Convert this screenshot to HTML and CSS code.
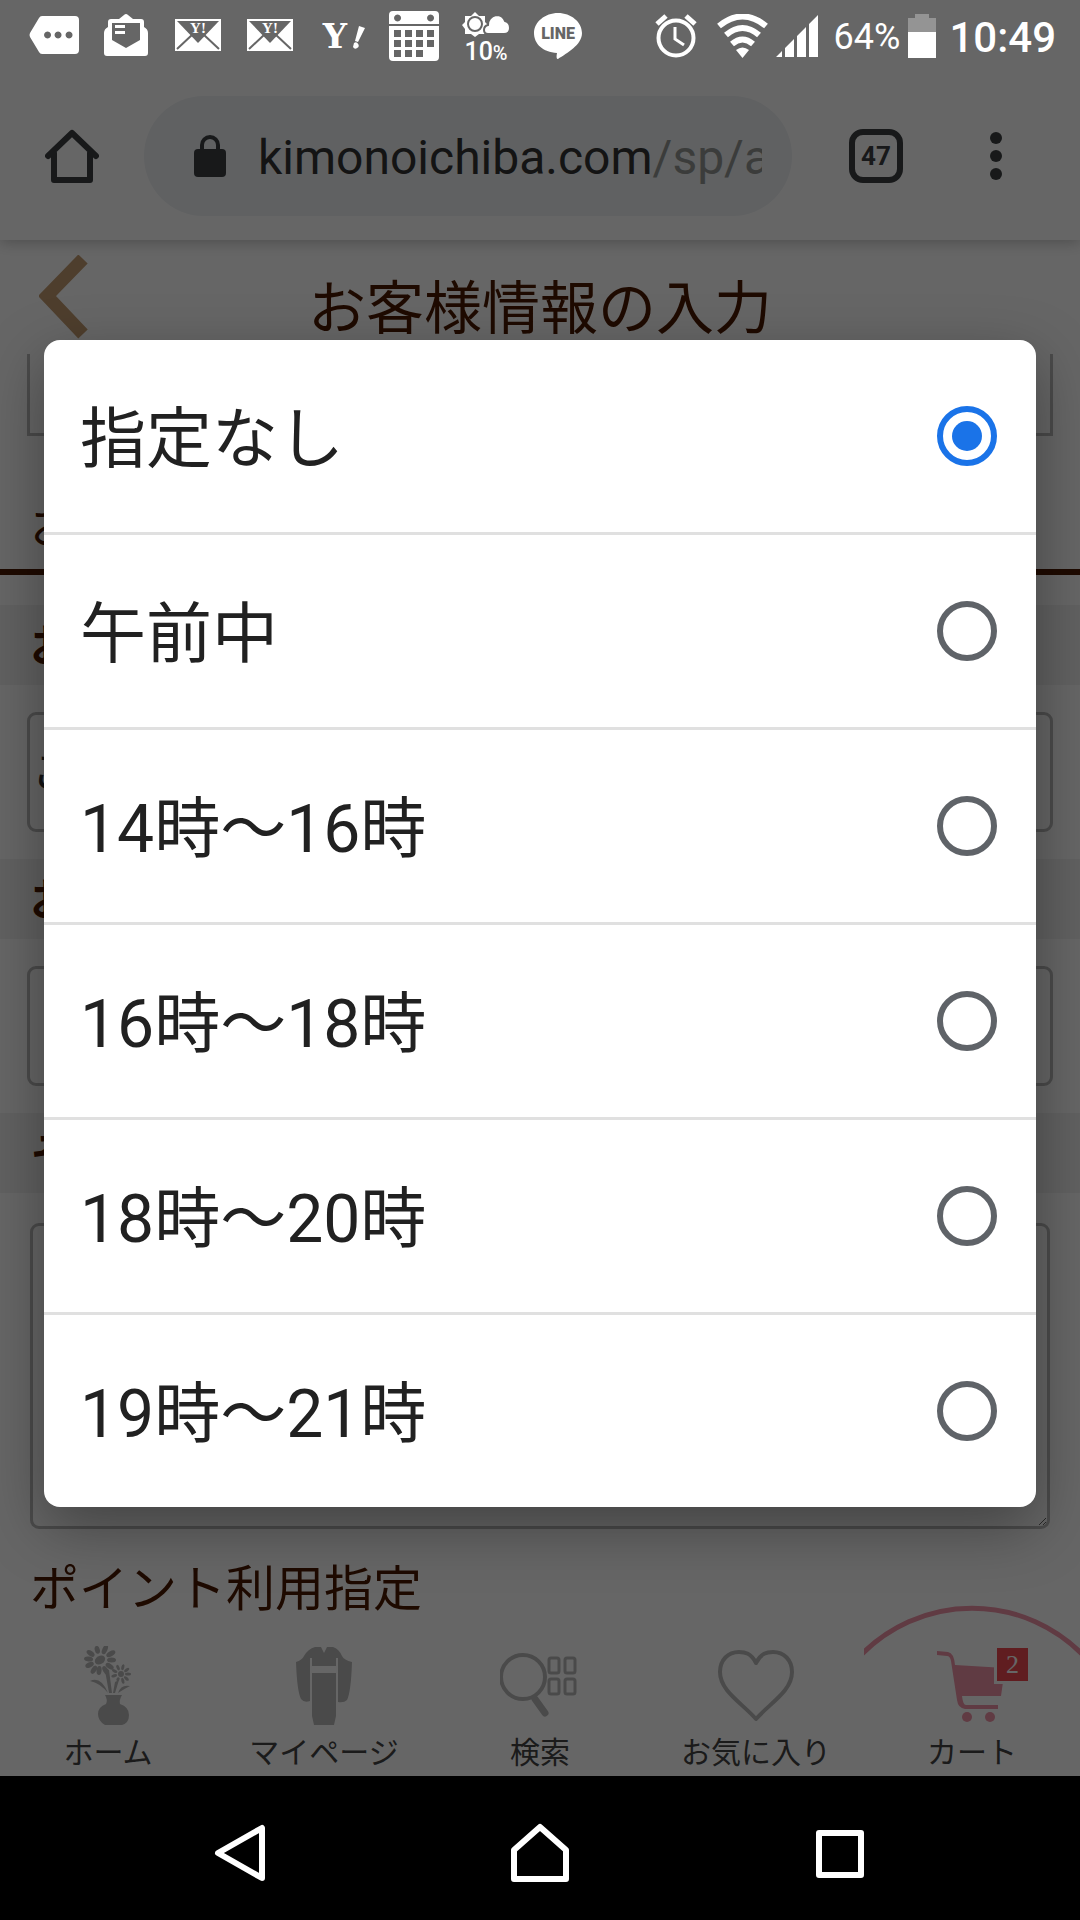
FILE: index.html
```html
<!DOCTYPE html>
<html lang="ja">
<head>
    <meta charset="UTF-8">
    <meta name="viewport" content="width=device-width, initial-scale=1.0">
    <title>お客様情報の入力</title>
    <link rel="stylesheet" href="styles.css">
</head>
<body>
    <div class="phone">
        <!-- Status bar -->
        <div class="status-bar">
            <div class="status-left">
                <svg width="50" height="50" viewBox="0 0 50 50"><path fill="#fff" fill-rule="evenodd" d="M13 5h33a4 4 0 0 1 4 4v30a4 4 0 0 1-4 4H13q-2 0-3-2L1 26q-1-2 0-4L10 7q1-2 3-2zM18.500 20.500a3.500 3.500 0 1 0 .1 0zM29 20.500a3.500 3.500 0 1 0 .1 0zM40 20.500a3.500 3.500 0 1 0 .1 0z"/></svg>
                <svg width="50" height="50" viewBox="0 0 50 50"><path fill="#fff" fill-rule="evenodd" d="M18 8l5-4q2-2 4 0l5 4h8q3 0 3 3v5q4 2 4 6v20q0 3-3 3H6q-3 0-3-3V22q0-4 4-6v-5q0-3 3-3zM11 12v17l14 8 14-8V12z"/><path fill="#fff" d="M14 14h10v3H14zM14 20h10v3H14z"/></svg>
                <svg width="50" height="50" viewBox="0 0 50 50"><path fill="#fff" d="M2 8h46v32H2z"/><path fill="#666" d="M4 10h42L25 32z"/><path stroke="#666" stroke-width="2" d="M4 38l16-15M46 38L30 23"/><text class="y-small" x="25" y="22">Y!</text></svg>
                <svg width="50" height="50" viewBox="0 0 50 50"><path fill="#fff" d="M2 8h46v32H2z"/><path fill="#666" d="M4 10h42L25 32z"/><path stroke="#666" stroke-width="2" d="M4 38l16-15M46 38L30 23"/><text class="y-small" x="25" y="22">Y!</text></svg>
                <svg width="50" height="50" viewBox="0 0 50 50"><text class="y-logo" x="18" y="37">Y</text><path fill="#fff" d="M42 15l6 2-7 14-3-1zM37 32a3 3 0 1 1-1 4z"/></svg>
                <svg width="50" height="50" viewBox="0 0 50 50"><path fill="#fff" fill-rule="evenodd" d="M4 0h42a4 4 0 0 1 4 4v9H0V4a4 4 0 0 1 4-4zM8.500 3.500a3.500 3.500 0 1 0 .1 0zM41.500 3.500a3.500 3.500 0 1 0 .1 0zM0 15h50v31a4 4 0 0 1-4 4H4a4 4 0 0 1-4-4z"/><path fill="#666" d="M5 19h7v7H5zM16 19h7v7h-7zM27 19h7v7h-7zM38 19h7v7h-7zM5 29h7v7H5zM16 29h7v7h-7zM27 29h7v7h-7zM38 29h7v7h-7zM5 39h7v7H5zM16 39h7v7h-7zM27 39h7v7h-7z"/></svg>
                <svg class="weather" width="50" height="50" viewBox="0 0 50 50"><path fill="#fff" d="M14 1l4 4h6v6l3 3-3 4v5h-6l-4 3-4-3H4v-5l-3-4 3-3V5h6z"/><circle cx="14" cy="13" r="7" fill="none" stroke="#666" stroke-width="2"/><path fill="#fff" stroke="#666" stroke-width="2" d="M27 23q-4 0-4-4t4-5q0-8 8-10 7 0 9 6 5 1 5 7 0 6-6 6z"/><text class="rain" x="25" y="49">10<tspan class="rain-unit">%</tspan></text></svg>
                <svg width="50" height="50" viewBox="0 0 50 50"><path fill="#fff" d="M25 2c13 0 24 9 24 20 0 12-15 20-24 26-1 0-2-1-1-6C10 41 1 33 1 22 1 11 12 2 25 2z"/><text class="line-logo" x="25" y="28">LINE</text></svg>
            </div>
            <div class="status-right">
                <svg width="42" height="44" viewBox="0 0 42 44" fill="none" stroke="#fff"><circle cx="21" cy="24" r="17.500" stroke-width="4"/><path stroke-width="5" d="M2 10l9-8M40 10l-9-8"/><path stroke-width="3" d="M20 13v12l9 6"/></svg>
                <svg width="51" height="44" viewBox="0 0 51 44" fill="none" stroke="#fff" stroke-width="6"><path d="M2 12q23.500-19 47 0M9 21q16.500-14 33 0M15 30q10.500-9 21 0"/><path fill="#fff" stroke="none" d="M19 36q6.500-5 13 0l-6.500 8z"/></svg>
                <svg width="42" height="44" viewBox="0 0 42 44" fill="#fff"><path d="M0 43l6-6v6zM9 34l9-9v18H9zM21 22l9-9v30h-9zM33 10l9-9v42h-9z"/></svg>
                <span class="battery-level">64%</span>
                <svg class="battery" width="28" height="44" viewBox="0 0 28 44"><path fill="#949494" d="M7 0h14v4h7v15H0V4h7z"/><path fill="#fff" d="M0 18h28v26H0z"/></svg>
                <span class="clock">10:49</span>
            </div>
        </div>

        <div class="screen">
            <!-- Browser toolbar -->
            <div class="toolbar">
                <button class="icon-button" type="button" aria-label="ホーム">
                    <svg width="54" height="54" viewBox="0 0 54 54" fill="none" stroke="#3c4043" stroke-width="6" stroke-linejoin="round" stroke-linecap="round"><path d="M3 27L27 4l24 23M9 24v27h36V24"/></svg>
                </button>
                <div class="omnibox">
                    <svg width="32" height="42" viewBox="0 0 32 42"><rect y="14" width="32" height="28" rx="4" fill="#3c4043"/><path d="M8 15v-5a8 8 0 0 1 16 0v5" fill="none" stroke="#3c4043" stroke-width="4"/></svg>
                    <div class="url">kimonoichiba.com<span class="url-path">/sp/a</span></div>
                </div>
                <button class="tab-count" type="button">47</button>
                <button class="icon-button" type="button" aria-label="メニュー">
                    <svg width="12" height="48" viewBox="0 0 12 48" fill="#3c4043"><circle cx="6" cy="6" r="6"/><circle cx="6" cy="24" r="6"/><circle cx="6" cy="42" r="6"/></svg>
                </button>
            </div>

            <!-- Shop page -->
            <header class="page-header">
                <a class="back" href="#" aria-label="戻る">
                    <svg width="50" height="84" viewBox="0 0 50 84" fill="none" stroke="#c39c72" stroke-width="13"><path d="M44 4L8 41l36 38"/></svg>
                </a>
                <h1>お客様情報の入力</h1>
            </header>

            <main class="form">
                <input class="field field-cut" type="text" aria-label="入力欄">
                <h2 class="section-title">お</h2>
                <label class="band" for="delivery-date">お</label>
                <select class="field" id="delivery-date">
                    <option>ご</option>
                </select>
                <label class="band" for="delivery-time">お</label>
                <input class="field" type="text" id="delivery-time">
                <label class="band" for="notes">そ</label>
                <textarea class="notes" id="notes"></textarea>
                <h2 class="point-title">ポイント利用指定</h2>
            </main>

            <nav class="tabs">
                <a class="tab" href="#">
                    <svg width="56" height="80" viewBox="0 0 56 80" fill="#b9b9b9">
                        <g transform="translate(20 14)">
                            <ellipse rx="5.500" ry="4" transform="rotate(-30)"/>
                            <ellipse cx="11.500" rx="4.500" ry="2.500"/>
                            <ellipse cx="11.500" rx="4.500" ry="2.500" transform="rotate(33)"/>
                            <ellipse cx="11.500" rx="4.500" ry="2.500" transform="rotate(62)"/>
                            <ellipse cx="10.500" rx="4.500" ry="2.500" transform="rotate(95)"/>
                            <ellipse cx="11.500" rx="4.500" ry="2.500" transform="rotate(122)"/>
                            <ellipse cx="11.500" rx="4.500" ry="2.500" transform="rotate(155)"/>
                            <ellipse cx="11.500" rx="4.500" ry="2.500" transform="rotate(185)"/>
                            <ellipse cx="11.500" rx="4.500" ry="2.500" transform="rotate(215)"/>
                            <ellipse cx="10.500" rx="4" ry="2.500" transform="rotate(255)"/>
                            <ellipse cx="11.500" rx="5" ry="2.500" transform="rotate(295)"/>
                            <ellipse cx="12.500" rx="5" ry="2.500" transform="rotate(330)"/>
                        </g>
                        <g transform="translate(41 28)">
                            <circle r="3"/>
                            <ellipse cx="7" rx="3" ry="1.500"/>
                            <ellipse cx="7" rx="3" ry="1.500" transform="rotate(40)"/>
                            <ellipse cx="7" rx="3" ry="1.500" transform="rotate(75)"/>
                            <ellipse cx="6" rx="2" ry="1.500" transform="rotate(120)"/>
                            <ellipse cx="7" rx="3" ry="1.500" transform="rotate(165)"/>
                            <ellipse cx="7" rx="3" ry="1.500" transform="rotate(205)"/>
                            <ellipse cx="7" rx="3" ry="1.500" transform="rotate(245)"/>
                            <ellipse cx="7" rx="3" ry="1.500" transform="rotate(285)"/>
                            <ellipse cx="7" rx="3" ry="1.500" transform="rotate(325)"/>
                        </g>
                        <path d="M24 21l5 3 3 23h-3L26 30zM35 36l4-2-4 13h-2zM10 35q11-5 18 12Q20 37 10 35zM38 47q3-9 12-7-6 3-12 7zM25 49h17q-3 5-2 9 9 3 9 11t-7 10H25q-7-4-7-11t8-10q2-4-1-9z"/>
                    </svg>
                    <span>ホーム</span>
                </a>
                <a class="tab" href="#">
                    <svg width="56" height="80" viewBox="0 0 56 80" fill="#b9b9b9"><path d="M19 1h6l3 6 3-6h6q6 2 9 9 2 4 10 6-1 30-5 38-3 3-9 2V12h-2v8H16v-8h-2v43q-6 2-9-2Q1 45 0 16q6-2 8-6 4-7 11-9zM16 27h24v43l-2 9H18l-2-9z"/></svg>
                    <span>マイページ</span>
                </a>
                <a class="tab" href="#">
                    <svg width="80" height="80" viewBox="0 0 80 80" fill="none" stroke="#b9b9b9"><circle cx="23" cy="31" r="22" stroke-width="4"/><path stroke-width="7" stroke-linecap="round" d="M35 53l10 14"/><rect x="49" y="12" width="10" height="15" rx="2" stroke-width="3"/><rect x="65" y="12" width="10" height="15" rx="2" stroke-width="3"/><rect x="49" y="33" width="10" height="15" rx="2" stroke-width="3"/><rect x="65" y="33" width="10" height="15" rx="2" stroke-width="3"/></svg>
                    <span>検索</span>
                </a>
                <a class="tab" href="#">
                    <svg width="80" height="80" viewBox="0 0 80 80" fill="none" stroke="#b9b9b9" stroke-width="4" stroke-linejoin="round"><path d="M40 17C35 7 29 6 23 6 12 6 4 14 4 26c0 19 22 31 36 47 14-16 36-28 36-47C76 14 68 6 57 6c-6 0-12 1-17 11z"/></svg>
                    <span>お気に入り</span>
                </a>
                <a class="tab tab-cart" href="#">
                    <svg class="arc" viewBox="0 0 216 52" fill="none" stroke="#f093a8" stroke-width="5"><path d="M-4 51A155 155 0 0 1 220 51"/></svg>
                    <span class="cart">
                        <svg width="70" height="80" viewBox="0 0 70 80" fill="#f093a8"><path d="M0 5l11 1q6 1 7 13l50 3-4 28H25q1 9 4 9h32v4H28q-7-1-8-9L14 15q-1-5-4-5L0 9z"/><circle cx="30" cy="71" r="5"/><circle cx="53" cy="71" r="5"/></svg>
                        <span class="badge">2</span>
                    </span>
                    <span>カート</span>
                </a>
            </nav>

            <!-- Delivery time picker -->
            <div class="scrim">
                <form class="picker" role="dialog" aria-label="配達時間">
                    <label class="option"><span>指定なし</span><input type="radio" name="time" checked></label>
                    <label class="option"><span>午前中</span><input type="radio" name="time"></label>
                    <label class="option"><span>14時〜16時</span><input type="radio" name="time"></label>
                    <label class="option"><span>16時〜18時</span><input type="radio" name="time"></label>
                    <label class="option"><span>18時〜20時</span><input type="radio" name="time"></label>
                    <label class="option"><span>19時〜21時</span><input type="radio" name="time"></label>
                </form>
            </div>
        </div>

        <!-- System navigation -->
        <div class="system-nav">
            <button type="button" aria-label="戻る"><svg width="60" height="60" viewBox="0 0 60 60" fill="none" stroke="#fff" stroke-width="6" stroke-linejoin="round"><path d="M52 5v50L8 30z"/></svg></button>
            <button type="button" aria-label="ホーム"><svg width="60" height="60" viewBox="0 0 60 60" fill="none" stroke="#fff" stroke-width="6" stroke-linejoin="round"><path d="M30 4l26 23v29H4V27z"/></svg></button>
            <button type="button" aria-label="アプリ履歴"><svg width="60" height="60" viewBox="0 0 60 60" fill="none" stroke="#fff" stroke-width="6" stroke-linejoin="round"><path d="M9 10h42v42H9z"/></svg></button>
        </div>
    </div>
</body>
</html>
```

FILE: styles.css
```css
* {
    box-sizing: border-box;
}
body {
    font-family: Roboto, "Noto Sans CJK JP", sans-serif;
    background-color: #000;
    color: #212121;
    margin: 0;
}
button {
    border: none;
    background: none;
    padding: 0;
    font-family: inherit;
}
svg {
    display: block;
}
h1, h2 {
    margin: 0;
    font-weight: normal;
    color: #4d1b00;
}
.phone {
    display: flex;
    flex-direction: column;
    min-height: 100vh;
}

/* status bar */
.status-bar {
    display: flex;
    justify-content: space-between;
    align-items: center;
    height: 72px;
    padding: 0 24px 0 29px;
    background-color: #666;
    color: #fff;
}
.status-left {
    display: flex;
    gap: 22px;
}
.status-right {
    display: flex;
    align-items: center;
    gap: 8px;
}
.status-right svg:first-child {
    margin-right: 12px;
}
.battery-level {
    margin-left: 8px;
    padding-top: 2px;
    font-size: 36px;
}
.clock {
    margin-left: 5px;
    padding-top: 2px;
    font-size: 42px;
    font-weight: 500;
}
.y-logo {
    font: bold 34px "DejaVu Serif", serif;
    fill: #fff;
    text-anchor: middle;
}
.y-small {
    font: bold 15px "Liberation Serif", serif;
    fill: #fff;
    text-anchor: middle;
}
.weather {
    overflow: visible;
}
.rain {
    font-size: 25px;
    font-weight: 500;
    fill: #fff;
    text-anchor: middle;
}
.rain-unit {
    font-size: 20px;
}
.line-logo {
    font-size: 16px;
    font-weight: 900;
    fill: #666;
    text-anchor: middle;
}

/* browser */
.screen {
    flex: 1;
    display: flex;
    flex-direction: column;
    position: relative;
    background-color: #fff;
    overflow: hidden;
}
.toolbar {
    display: flex;
    align-items: center;
    height: 168px;
    padding: 0 78px 0 45px;
    box-shadow: 0 2px 14px rgba(0, 0, 0, 0.25);
}
.omnibox {
    flex: 1;
    display: flex;
    align-items: center;
    gap: 32px;
    min-width: 0;
    height: 120px;
    margin: 0 57px 0 45px;
    padding: 0 30px 0 50px;
    border-radius: 60px;
    background-color: #eff2f5;
}
.url {
    flex: 1;
    min-width: 0;
    padding-top: 2px;
    overflow: hidden;
    white-space: nowrap;
    font-size: 48px;
    color: #333;
}
.url-path {
    color: #939793;
}
.tab-count {
    flex-shrink: 0;
    width: 54px;
    height: 54px;
    margin-right: 87px;
    border: 6px solid #3c4043;
    border-radius: 14px;
    font-size: 26px;
    font-weight: bold;
    color: #3c4043;
}

/* page */
.page-header {
    display: grid;
    grid-template-columns: 1fr auto 1fr;
    align-items: center;
    height: 114px;
    padding: 0 39px;
}
.page-header h1 {
    font-size: 58px;
    line-height: 84px;
    padding-top: 24px;
}
.form {
    flex: 1;
    display: flex;
    flex-direction: column;
}
.field {
    height: 120px;
    margin: 27px;
    padding: 0 2px;
    border: 3px solid #bbb;
    border-radius: 9px;
    background-color: #fff;
    font-family: inherit;
    font-size: 45px;
    color: #333;
    appearance: none;
}
.field-cut {
    height: 82px;
    margin: 0 27px 55px;
    border-top: none;
    border-radius: 0;
}
.section-title {
    padding: 0 30px 6px;
    margin-bottom: 30px;
    border-bottom: 6px solid #4d1b00;
    font-size: 48px;
    line-height: 72px;
}
.band {
    padding: 4px 30px 0;
    background-color: #f2f2f2;
    font-size: 44px;
    font-weight: bold;
    line-height: 76px;
    color: #4d1b00;
}
.notes {
    height: 306px;
    margin: 30px 30px 24px;
    border: 3px solid #bbb;
    border-radius: 9px;
    background-color: #fff;
}
.point-title {
    padding: 2px 30px 0;
    font-size: 49px;
    line-height: 70px;
}
.tabs {
    display: flex;
}
.tab {
    flex: 1;
    display: flex;
    flex-direction: column;
    align-items: center;
    gap: 4px;
    font-size: 30px;
    line-height: 46px;
    color: #444;
    text-decoration: none;
}
.tab-cart {
    position: relative;
}
.arc {
    position: absolute;
    left: 0;
    bottom: 119px;
    width: 100%;
}
.cart {
    position: relative;
}
.badge {
    position: absolute;
    top: 2px;
    right: -21px;
    width: 34px;
    border: 3px solid #fff;
    border-top: none;
    border-right: none;
    background-color: #f04a50;
    color: #fff;
    font-family: "Liberation Serif", serif;
    font-size: 26px;
    line-height: 33px;
    text-align: center;
}

/* picker dialog */
.scrim {
    position: absolute;
    inset: 0;
    display: flex;
    align-items: center;
    padding: 0 44px 2px;
    background-color: rgba(0, 0, 0, 0.6);
}
.picker {
    flex: 1;
    border-radius: 16px;
    background-color: #fff;
    box-shadow: 0 20px 60px rgba(0, 0, 0, 0.35);
}
.option {
    display: flex;
    justify-content: space-between;
    align-items: center;
    padding: 48px 39px 48px 36px;
    font-size: 66px;
    line-height: 88px;
}
.option + .option {
    border-top: 3px solid #e0e0e0;
}
.option span {
    padding-top: 8px;
}
.option input {
    appearance: none;
    display: grid;
    place-content: center;
    width: 60px;
    height: 60px;
    margin: 0;
    border: 6px solid #5f6368;
    border-radius: 50%;
}
.option input:checked {
    border-color: #1a73e8;
}
.option input:checked::before {
    content: "";
    width: 30px;
    height: 30px;
    border-radius: 50%;
    background-color: #1a73e8;
}

/* system navigation */
.system-nav {
    display: flex;
    height: 144px;
    padding: 10px 90px 0;
}
.system-nav button {
    flex: 1;
    display: flex;
    justify-content: center;
    align-items: center;
}
```
